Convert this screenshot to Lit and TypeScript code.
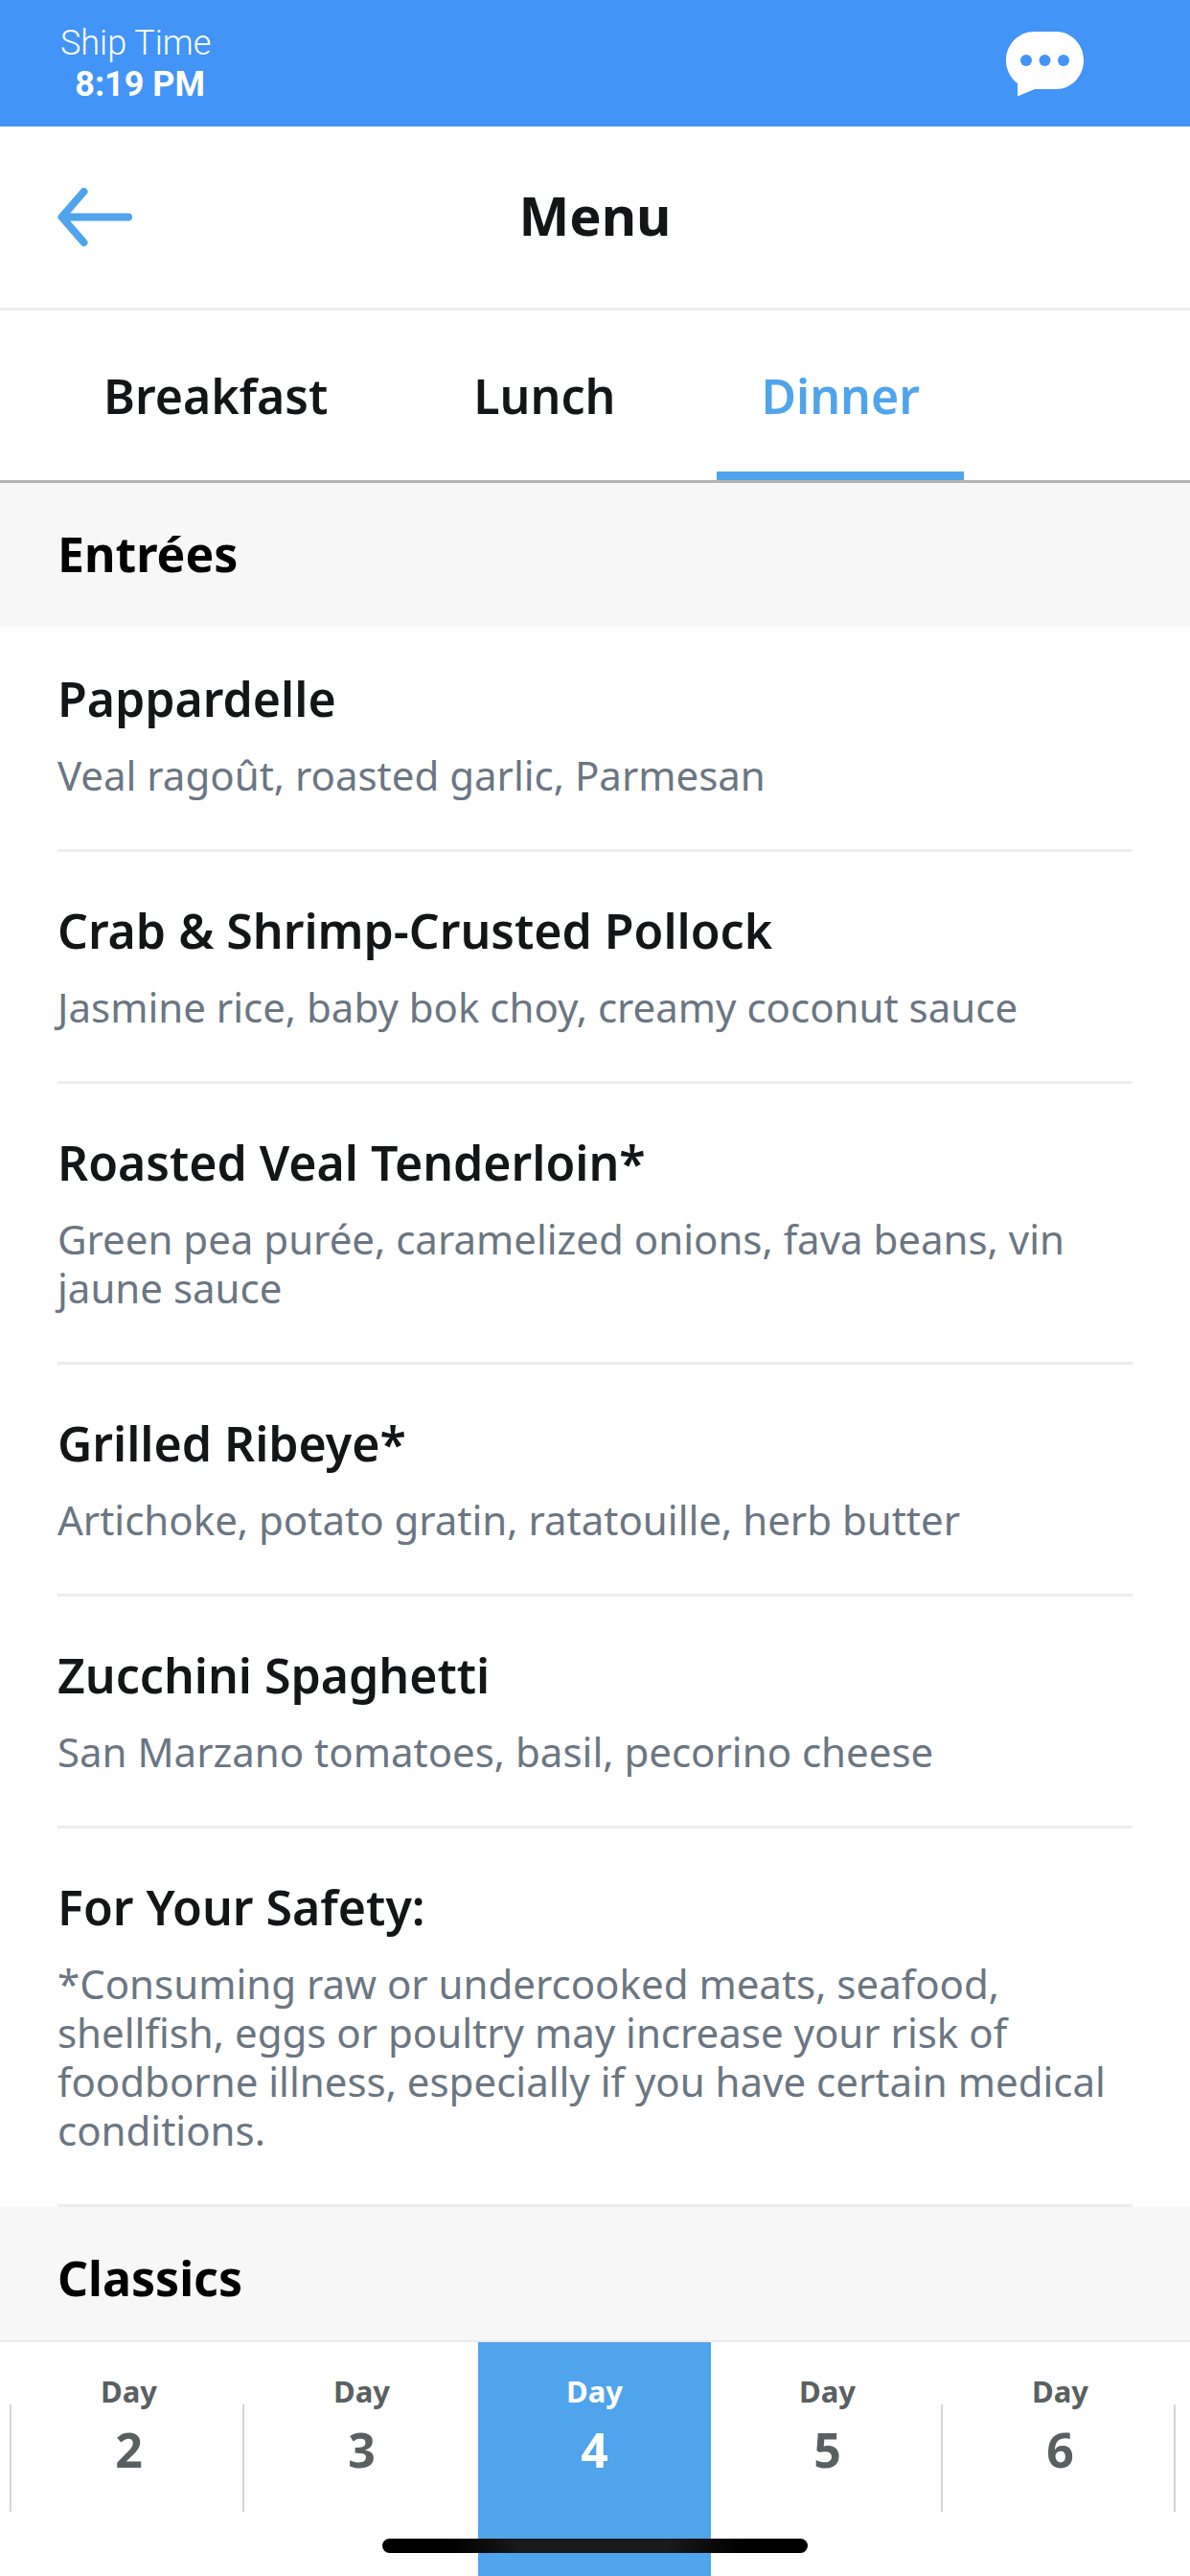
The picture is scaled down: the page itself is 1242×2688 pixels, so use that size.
import { LitElement, html, css, nothing } from "lit";
import { customElement, property, state } from "lit/decorators.js";
import { classMap } from "lit/directives/class-map.js";

interface Dish {
  name: string;
  description: string;
}

interface Course {
  title: string;
  dishes: Dish[];
}

const MEALS = ["Breakfast", "Lunch", "Dinner"];

const COURSES: Course[] = [
  {
    title: "Entrées",
    dishes: [
      { name: "Pappardelle", description: "Veal ragoût, roasted garlic, Parmesan" },
      {
        name: "Crab & Shrimp-Crusted Pollock",
        description: "Jasmine rice, baby bok choy, creamy coconut sauce",
      },
      {
        name: "Roasted Veal Tenderloin*",
        description: "Green pea purée, caramelized onions, fava beans, vin jaune sauce",
      },
      { name: "Grilled Ribeye*", description: "Artichoke, potato gratin, ratatouille, herb butter" },
      { name: "Zucchini Spaghetti", description: "San Marzano tomatoes, basil, pecorino cheese" },
      {
        name: "For Your Safety:",
        description:
          "*Consuming raw or undercooked meats, seafood, shellfish, eggs or poultry may increase your risk of foodborne illness, especially if you have certain medical conditions.",
      },
    ],
  },
  { title: "Classics", dishes: [] },
];

const DAYS = [2, 3, 4, 5, 6];

/** Blue bar with the ship's clock and the chat shortcut. */
@customElement("ship-bar")
export class ShipBar extends LitElement {
  static styles = css`
    :host {
      display: flex;
      align-items: center;
      justify-content: space-between;
      padding: 24px 111px 22px 63px;
      background: #4294f7;
      color: #fff;
    }
    .clock {
      font-family: Roboto, sans-serif;
      font-size: 36px;
      line-height: 43px;
      text-align: center;
    }
    .label {
      font-weight: 300;
    }
    .time {
      padding-left: 9px;
      font-weight: 700;
    }
    .chat {
      padding: 0;
      border: 0;
      background: none;
      color: inherit;
      cursor: pointer;
    }
    .chat svg {
      display: block;
    }
    .dots {
      fill: #4294f7;
    }
  `;

  @property() time = "";

  render() {
    return html`
      <div class="clock">
        <div class="label">Ship Time</div>
        <div class="time">${this.time}</div>
      </div>
      <button class="chat" type="button" aria-label="Chat">
        <svg width="81" height="68" viewBox="0 0 81 68" fill="currentColor">
          <path
            d="M29.5 0H52C68.5 0 81 13.5 81 30S68.5 60 52 60H30L12 67.5V54C4.500 48.5 0 39.5 0 30C0 13.5 13 0 29.5 0Z"
          />
          <g class="dots">
            <circle cx="21" cy="30" r="6" />
            <circle cx="40.5" cy="30" r="6" />
            <circle cx="60" cy="30" r="6" />
          </g>
        </svg>
      </button>
    `;
  }
}

/** One course heading followed by its dishes. */
@customElement("menu-course")
export class MenuCourse extends LitElement {
  static styles = css`
    :host {
      display: block;
    }
    .title {
      margin: 0;
      padding: 44px 60px 46px;
      background: #f7f7f7;
      color: #000;
      font-size: 50px;
      font-weight: 700;
      line-height: 60px;
    }
    .dishes {
      margin: 0 60px;
      padding: 0;
      list-style: none;
    }
    .dish {
      padding: 52px 0;
      border-bottom: 3px solid #ededee;
    }
    .dish:first-child {
      padding-top: 45px;
    }
    .name {
      margin: 0 0 24px;
      color: #141517;
      font-size: 50px;
      font-weight: 600;
      line-height: 60px;
    }
    .description {
      margin: 0;
      color: #6b7682;
      font-size: 42px;
      line-height: 51px;
    }
  `;

  @property({ attribute: false }) course!: Course;

  render() {
    const { title, dishes } = this.course;
    return html`
      <h2 class="title">${title}</h2>
      ${dishes.length
        ? html`<ul class="dishes">
            ${dishes.map(
              (dish) => html`<li class="dish">
                <h3 class="name">${dish.name}</h3>
                <p class="description">${dish.description}</p>
              </li>`
            )}
          </ul>`
        : nothing}
    `;
  }
}

/** Strip of cruise days along the bottom edge. */
@customElement("day-picker")
export class DayPicker extends LitElement {
  static styles = css`
    :host {
      position: relative;
      display: block;
      flex: none;
      border-top: 2px solid #ebebeb;
      background: #fff;
    }
    .days {
      display: grid;
      grid-template-columns: 13px repeat(5, 1fr) 14px;
    }
    .day {
      padding: 31px 0 102px;
      border: 0;
      background: none;
      color: #5a6061;
      font: inherit;
      font-weight: 700;
      text-align: center;
      cursor: pointer;
    }
    .ruled {
      background: linear-gradient(#d5d5d5, #d5d5d5) right 1px top 65px / 2px 112px no-repeat;
    }
    .selected {
      background: #4fa4ec;
      color: #fff;
    }
    .word,
    .number {
      display: block;
    }
    .word {
      margin-bottom: 11px;
      font-size: 31px;
      line-height: 40px;
    }
    .number {
      font-size: 50px;
      line-height: 60px;
    }
    .home {
      position: absolute;
      right: 0;
      bottom: 24px;
      left: 0;
      width: 444px;
      height: 15px;
      margin: 0 auto;
      border-radius: 8px;
      background: linear-gradient(90deg, #000 16%, #1a1a1a 33%, #1a1a1a 67%, #000 84%);
    }
  `;

  @state() private selected = 4;

  render() {
    return html`
      <div class="days">
        <span class="ruled"></span>
        ${DAYS.map((day) => {
          const selected = day === this.selected;
          const ruled = !selected && day + 1 !== this.selected;
          return html`<button
            type="button"
            class=${classMap({ day: true, selected, ruled })}
            aria-pressed=${selected}
            @click=${() => (this.selected = day)}
          >
            <span class="word">Day</span>
            <span class="number">${day}</span>
          </button>`;
        })}
      </div>
      <div class="home"></div>
    `;
  }
}

@customElement("app-root")
export class AppRoot extends LitElement {
  static styles = css`
    :host {
      display: flex;
      flex-direction: column;
      height: 100vh;
      background: #fff;
      color: #141517;
      font-family: "Noto Sans", sans-serif;
    }
    .nav {
      display: grid;
      grid-template-columns: 1fr auto 1fr;
      align-items: center;
      padding: 60px;
      border-bottom: 3px solid #ededed;
    }
    .back {
      justify-self: start;
      padding: 0;
      border: 0;
      background: none;
      color: #4fa4ec;
      cursor: pointer;
    }
    .back svg {
      display: block;
    }
    .heading {
      margin: 0;
      padding-bottom: 5px;
      font-size: 56px;
      font-weight: 700;
      line-height: 64px;
    }
    .tabs {
      display: flex;
      gap: 60px;
      padding: 0 62px;
      border-bottom: 3px solid #b3b3b3;
    }
    .tab {
      padding: 59px 46px 49px;
      border: 0;
      border-bottom: 9px solid transparent;
      background: none;
      color: inherit;
      font: inherit;
      font-size: 50px;
      font-weight: 600;
      line-height: 60px;
      cursor: pointer;
    }
    .active {
      border-bottom-color: #4fa4ec;
      color: #4fa4ec;
    }
    .menu {
      flex: 1;
      min-height: 0;
      overflow-y: auto;
      scrollbar-width: none;
    }
  `;

  @state() private meal = "Dinner";

  render() {
    return html`
      <ship-bar time="8:19 PM"></ship-bar>
      <header class="nav">
        <button class="back" type="button" aria-label="Back">
          <svg
            width="78"
            height="61"
            viewBox="0 0 78 61"
            fill="none"
            stroke="currentColor"
            stroke-width="8"
            stroke-linecap="round"
            stroke-linejoin="round"
          >
            <path d="M27.5 4L4.5 30.5L27.5 57M5 30.5H74" />
          </svg>
        </button>
        <h1 class="heading">Menu</h1>
      </header>
      <nav class="tabs" role="tablist">
        ${MEALS.map(
          (meal) => html`<button
            type="button"
            role="tab"
            class=${classMap({ tab: true, active: meal === this.meal })}
            aria-selected=${meal === this.meal}
            @click=${() => (this.meal = meal)}
          >
            ${meal}
          </button>`
        )}
      </nav>
      <main class="menu">
        ${COURSES.map((course) => html`<menu-course .course=${course}></menu-course>`)}
      </main>
      <day-picker></day-picker>
    `;
  }
}
